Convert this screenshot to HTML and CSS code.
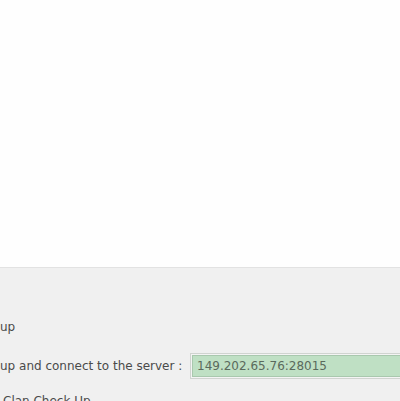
FILE: index.html
```html
<!DOCTYPE html>
<html>
<head>
<meta charset="utf-8">
<link rel="stylesheet" href="styles.css">
</head>
<body>
<div class="top"></div>
<div class="panel">
  <div class="row row-title">up</div>
  <div class="row row-server">
    <span class="label">up and connect to the server :</span>
    <div class="field"><span class="value">149.202.65.76:28015</span></div>
  </div>
  <div class="row row-last">Clan Check Up</div>
</div>
</body>
</html>
```
FILE: styles.css
```css
html, body {
  margin: 0;
  padding: 0;
  width: 400px;
  height: 401px;
  overflow: hidden;
  background: #f0f0f0;
  font-family: "DejaVu Sans", Verdana, sans-serif;
  font-size: 12px;
  color: #4a4a4a;
}
.top {
  height: 267px;
  background: #fefefe;
  border-bottom: 1px solid #e2e2e2;
}
.panel {
  background: #f0f0f0;
  display: flex;
  flex-direction: column;
}
.row-title {
  margin-top: 52px;
  height: 14px;
  line-height: 14px;
}
.row-server {
  margin-top: 19px;
  display: flex;
  align-items: center;
  white-space: nowrap;
}
.label {
  width: 190px;
  flex: none;
}
.field {
  flex: none;
  width: 214px;
  height: 22px;
  border: 1px solid #d0d4d0;
  padding: 1px;
  box-sizing: content-box;
  background: #f4f4f4;
}
.value {
  display: block;
  height: 20px;
  line-height: 20px;
  background: #bfe0c4;
  border: 1px solid #a9c8ae;
  padding-left: 4px;
  color: #5a6a5c;
  font-size: 12px;
}
.row-last {
  margin-top: 15px;
  line-height: 14px;
  padding-left: 3px;
  white-space: nowrap;
}
```
